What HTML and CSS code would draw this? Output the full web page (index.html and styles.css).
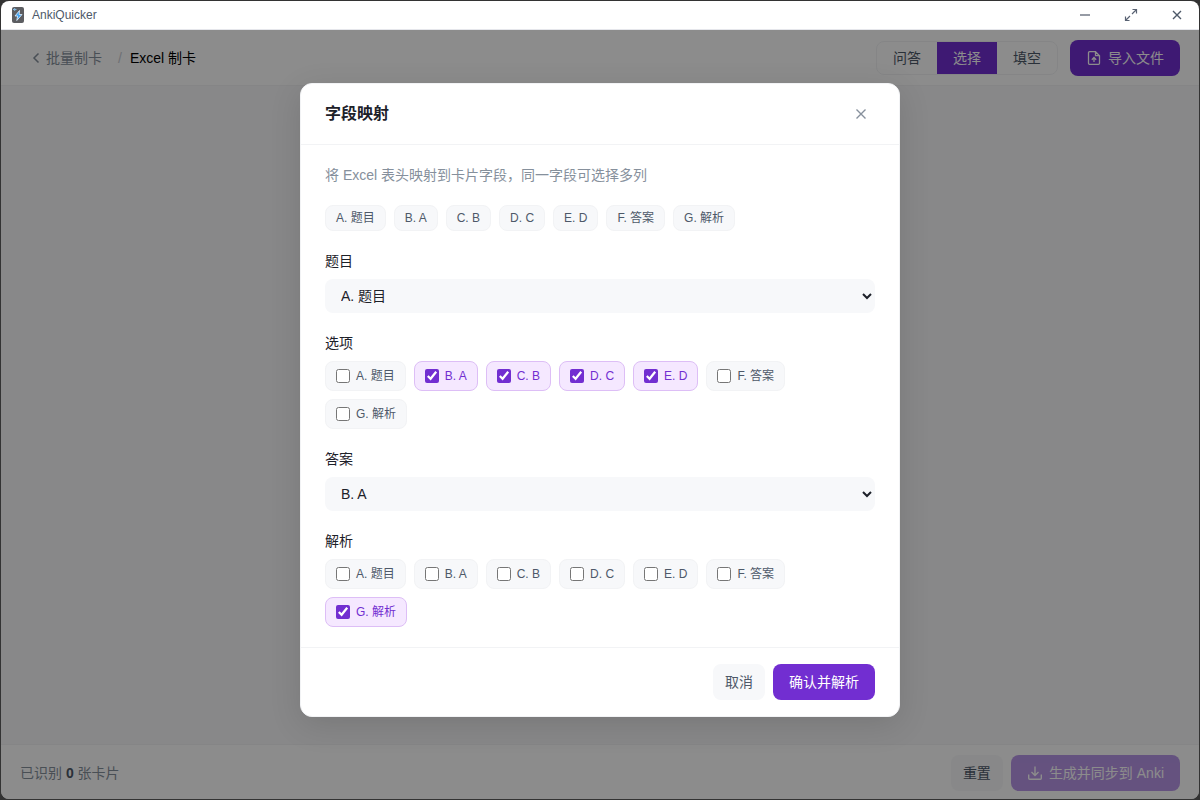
FILE: index.html
```html
<!DOCTYPE html>
<html lang="zh-CN">
<head>
  <meta charset="UTF-8">
  <title>AnkiQuicker</title>
  <link rel="stylesheet" href="styles.css">
</head>
<body>
  <div class="window">
    <div class="titlebar">
      <svg class="app-icon" width="12" height="16" viewBox="0 0 12 16">
        <rect width="12" height="16" rx="2" fill="#5c5d61"/>
        <path d="M1 2.500h3.500M2.700 1v3" stroke="#86b9e0" stroke-width="1"/>
        <path d="M7.500 3.500L3 9h2.600L4.800 13.500 10 7.500H7.200z" fill="#42a5f5" stroke="#e4f3ff" stroke-width=".8"/>
      </svg>
      <span class="app-name">AnkiQuicker</span>
      <div class="window-controls">
        <svg width="14" height="14" viewBox="0 0 14 14"><path d="M2 7h10" stroke="#969ba5" stroke-width="1.8"/></svg>
        <svg width="14" height="14" viewBox="0 0 14 14" fill="none" stroke="#596273" stroke-width="1.2"><path d="M8.500 1.500h4V5.500M12.500 1.500L8 6M1.500 8.500v4H5.500M1.500 12.500L6 8"/></svg>
        <svg width="14" height="14" viewBox="0 0 14 14" fill="none" stroke="#4e5969" stroke-width="1.400"><path d="M3 3l8 8M11 3l-8 8"/></svg>
      </div>
    </div>

    <div class="app">
      <header class="toolbar">
        <div class="breadcrumb">
          <a class="back">
            <svg width="12" height="12" viewBox="0 0 12 12" fill="none" stroke="currentColor" stroke-width="1.500"><path d="M8.500 1.500L4 6l4.500 4.500"/></svg>批量制卡</a>
          <span class="slash">/</span>
          <span class="current">Excel 制卡</span>
        </div>
        <div class="toolbar-right">
          <div class="segmented">
            <span class="segment">问答</span>
            <span class="segment active">选择</span>
            <span class="segment">填空</span>
          </div>
          <button class="btn btn-primary">
            <svg width="16" height="16" viewBox="0 0 16 16" fill="none" stroke="currentColor" stroke-width="1.300"><path d="M9.500 1.700H3.500a1 1 0 0 0-1 1v10.600a1 1 0 0 0 1 1h9a1 1 0 0 0 1-1V5.700zM9.500 1.700v4h4M8 12V8M5.800 9.700L8 7.500l2.200 2.200"/></svg>
            导入文件
          </button>
        </div>
      </header>

      <main class="content"></main>

      <footer class="bottombar">
        <div class="count">已识别 <b>0</b> 张卡片</div>
        <div class="actions">
          <button class="btn btn-default">重置</button>
          <button class="btn btn-primary disabled">
            <svg width="16" height="16" viewBox="0 0 16 16" fill="none" stroke="currentColor" stroke-width="1.400"><path d="M8 1.500v9M4.500 7L8 10.500 11.500 7M1.700 9.500v3.700a1 1 0 0 0 1 1h10.600a1 1 0 0 0 1-1V9.500"/></svg>
            生成并同步到 Anki
          </button>
        </div>
      </footer>

      <div class="overlay">
        <div class="modal">
          <div class="modal-header">
            <h2>字段映射</h2>
            <button class="close">
              <svg width="12" height="12" viewBox="0 0 12 12" fill="none" stroke="currentColor" stroke-width="1.400"><path d="M1.500 1.500l9 9M10.500 1.500l-9 9"/></svg>
            </button>
          </div>

          <div class="modal-body">
            <p class="hint">将 Excel 表头映射到卡片字段，同一字段可选择多列</p>
            <div class="chips">
              <span class="chip">A. 题目</span>
              <span class="chip">B. A</span>
              <span class="chip">C. B</span>
              <span class="chip">D. C</span>
              <span class="chip">E. D</span>
              <span class="chip">F. 答案</span>
              <span class="chip">G. 解析</span>
            </div>

            <div class="field">
              <div class="label">题目</div>
              <select><option>A. 题目</option></select>
            </div>

            <div class="field">
              <div class="label">选项</div>
              <div class="options">
                <label class="option"><input type="checkbox">A. 题目</label>
                <label class="option checked"><input type="checkbox" checked>B. A</label>
                <label class="option checked"><input type="checkbox" checked>C. B</label>
                <label class="option checked"><input type="checkbox" checked>D. C</label>
                <label class="option checked"><input type="checkbox" checked>E. D</label>
                <label class="option"><input type="checkbox">F. 答案</label>
                <label class="option"><input type="checkbox">G. 解析</label>
              </div>
            </div>

            <div class="field">
              <div class="label">答案</div>
              <select><option>B. A</option></select>
            </div>

            <div class="field">
              <div class="label">解析</div>
              <div class="options">
                <label class="option"><input type="checkbox">A. 题目</label>
                <label class="option"><input type="checkbox">B. A</label>
                <label class="option"><input type="checkbox">C. B</label>
                <label class="option"><input type="checkbox">D. C</label>
                <label class="option"><input type="checkbox">E. D</label>
                <label class="option"><input type="checkbox">F. 答案</label>
                <label class="option checked"><input type="checkbox" checked>G. 解析</label>
              </div>
            </div>
          </div>

          <div class="modal-footer">
            <button class="btn btn-default">取消</button>
            <button class="btn btn-primary">确认并解析</button>
          </div>
        </div>
      </div>
    </div>
  </div>
</body>
</html>
```
FILE: styles.css
```css
* {
  box-sizing: border-box;
}
body {
  margin: 0;
  padding: 1px;
  height: 800px;
  overflow: hidden;
  background: #333;
  font-family: "Liberation Sans", "Noto Sans CJK SC", sans-serif;
  font-size: 14px;
  line-height: 20px;
  color: #1d2129;
}
button, select {
  font-family: inherit;
  font-size: 14px;
}
svg {
  flex: none;
}
.window {
  height: 798px;
  display: flex;
  flex-direction: column;
  border-radius: 8px;
  overflow: hidden;
  background: #fff;
}

/* title bar */
.titlebar {
  height: 29px;
  flex: none;
  display: flex;
  align-items: center;
  padding: 0 15px 0 11px;
  border-bottom: 1px solid #e5e6eb;
}
.app-name {
  margin-left: 8px;
  font-size: 12px;
  line-height: 14px;
  color: #4e5969;
}
.window-controls {
  display: flex;
  gap: 32px;
  margin-left: auto;
}

/* page */
.app {
  position: relative;
  flex: 1;
  display: flex;
  flex-direction: column;
}
.toolbar {
  height: 56px;
  flex: none;
  display: flex;
  align-items: center;
  justify-content: space-between;
  padding: 0 19px 0 29px;
  border-bottom: 1px solid #f2f3f5;
}
.breadcrumb {
  display: flex;
  align-items: center;
}
.back {
  display: flex;
  align-items: center;
  gap: 4px;
  color: #86909c;
}
.slash {
  margin: 0 8px 0 16px;
  color: #c9cdd4;
}
.current {
  color: #000;
}
.toolbar-right {
  display: flex;
  align-items: center;
  gap: 12px;
}
.segmented {
  display: flex;
  height: 34px;
  border: 1px solid #f2f3f5;
  border-radius: 8px;
  overflow: hidden;
}
.segment {
  width: 60px;
  line-height: 32px;
  text-align: center;
  color: #4e5969;
}
.segment.active {
  background: #722ed1;
  color: #fff;
}
.content {
  flex: 1;
  background: #f7f8fa;
}
.bottombar {
  height: 55px;
  flex: none;
  display: flex;
  align-items: center;
  justify-content: space-between;
  padding: 2px 19px 0;
  border-top: 1px solid #f2f3f5;
}
.count {
  color: #86909c;
}
.count b {
  color: #4e5969;
}
.actions {
  display: flex;
  gap: 8px;
}

/* buttons */
.btn {
  display: flex;
  align-items: center;
  gap: 6px;
  height: 36px;
  padding: 0 16px;
  border: none;
  border-radius: 8px;
  line-height: 20px;
  white-space: nowrap;
}
.btn-primary {
  background: #722ed1;
  color: #fff;
}
.btn-default {
  padding: 0 12px;
  background: #f7f8fa;
  color: #4e5969;
}
.disabled {
  opacity: .5;
}

/* modal */
.overlay {
  position: absolute;
  inset: 0;
  display: flex;
  justify-content: center;
  align-items: flex-start;
  padding-top: 53px;
  background: rgba(0, 0, 0, .45);
}
.modal {
  width: 600px;
  height: 634px;
  background: #fff;
  border: 1px solid #f2f3f5;
  border-radius: 12px;
  box-shadow: 0 8px 32px rgba(0, 0, 0, .12);
}
.modal-header {
  height: 61px;
  display: flex;
  align-items: center;
  justify-content: space-between;
  padding: 0 32px 0 24px;
  border-bottom: 1px solid #f2f3f5;
}
.modal-header h2 {
  margin: 0;
  font-size: 16px;
  font-weight: 600;
  line-height: 22px;
}
.close {
  display: flex;
  padding: 0;
  border: none;
  background: none;
  color: #86909c;
}
.modal-body {
  padding: 20px 24px;
}
.hint {
  margin: 0 0 20px;
  color: #86909c;
}
.chips, .options {
  display: flex;
  flex-wrap: wrap;
  gap: 8px;
}
.chip, .option {
  display: flex;
  align-items: center;
  height: 26px;
  padding: 0 10px;
  border: 1px solid #f2f3f5;
  border-radius: 8px;
  background: #f7f8fa;
  font-size: 12px;
  line-height: 18px;
  color: #4e5969;
}
.option {
  height: 30px;
  gap: 6px;
}
.option input {
  width: 14px;
  height: 14px;
  margin: 0;
  accent-color: #722ed1;
}
.option.checked {
  background: #f5e8ff;
  border-color: #ddbef6;
  color: #722ed1;
}
.field {
  margin-top: 20px;
}
.label {
  margin-bottom: 8px;
}
select {
  display: block;
  width: 100%;
  height: 34px;
  padding: 0 12px;
  border: none;
  border-radius: 8px;
  background: #f7f8fa;
  color: #1d2129;
}
.modal-footer {
  display: flex;
  justify-content: flex-end;
  gap: 8px;
  padding: 16px 24px;
  border-top: 1px solid #f2f3f5;
}
```
